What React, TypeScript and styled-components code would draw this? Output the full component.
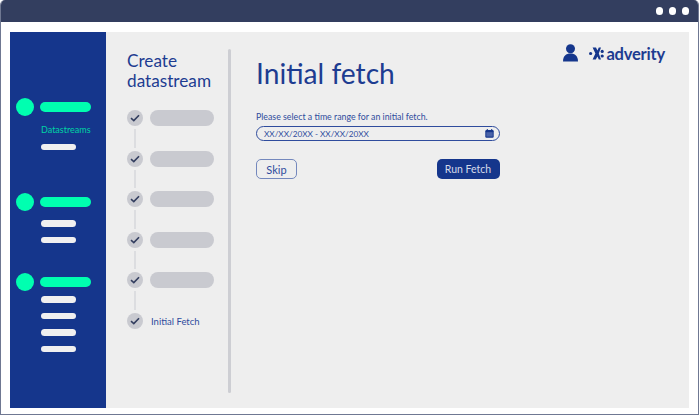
import React from 'react';
import styled, { createGlobalStyle } from 'styled-components';

const GlobalStyle = createGlobalStyle`
  html, body {
    margin: 0;
    padding: 0;
    background: #ffffff;
  }
  body {
    font-family: Lato, "Open Sans", sans-serif;
  }
`;

const Window = styled.div`
  width: 699px;
  height: 415px;
  box-sizing: border-box;
  border: 1px solid #6f7892;
  border-top: none;
  border-radius: 5px 5px 0 0;
  background: #ffffff;
  display: flex;
  flex-direction: column;
  overflow: hidden;
`;

const TitleBar = styled.div`
  height: 22px;
  flex: none;
  background: #333e5f;
  display: flex;
  align-items: center;
  justify-content: flex-end;
  gap: 5.5px;
  padding-right: 9px;
`;

const WindowDot = styled.span`
  width: 7.5px;
  height: 7.5px;
  border-radius: 50%;
  background: #ffffff;
`;

const Frame = styled.div`
  flex: 1;
  display: flex;
  margin: 9.5px 9px 6px 9px;
  min-height: 0;
`;

const Sidebar = styled.div`
  width: 96px;
  flex: none;
  background: #15368c;
  box-sizing: border-box;
  padding: 67px 0 0 6px;
  display: flex;
  flex-direction: column;
`;

const NavGroup = styled.div<{ $gap: number }>`
  display: flex;
  flex-direction: column;
  margin-bottom: ${(p) => p.$gap}px;
`;

const NavHead = styled.div`
  display: flex;
  align-items: center;
  gap: 6px;
  height: 17px;
`;

const NavDot = styled.span`
  width: 18px;
  height: 18px;
  flex: none;
  border-radius: 50%;
  background: #00ffb0;
`;

const NavBar = styled.span`
  width: 51px;
  height: 10px;
  border-radius: 5px;
  background: #00ffb0;
`;

const NavLabel = styled.div`
  margin: 8.5px 0 0 25px;
  font-size: 9px;
  line-height: 12px;
  color: #00d3a4;
`;

const SubList = styled.div<{ $top: number }>`
  display: flex;
  flex-direction: column;
  gap: 10px;
  margin: ${(p) => p.$top}px 0 0 25px;
`;

const SubBar = styled.span`
  width: 35px;
  height: 6.5px;
  border-radius: 4px;
  background: #f0f0f0;
`;

const Main = styled.div`
  flex: 1;
  background: #eeeeee;
  display: flex;
  position: relative;
  min-width: 0;
`;

const StepsColumn = styled.div`
  width: 102px;
  flex: none;
  box-sizing: border-box;
  margin: 17.5px 0 15px 21px;
`;

const StepsTitle = styled.h2`
  margin: 2px 0 19px;
  font-size: 17.2px;
  line-height: 20px;
  font-weight: 400;
  color: #1d3c91;
`;

const StepList = styled.div`
  display: flex;
  flex-direction: column;
`;

const Step = styled.div<{ $last?: boolean }>`
  display: flex;
  align-items: flex-start;
  gap: 7px;
  height: ${(p) => (p.$last ? 16 : 40.5)}px;
`;

const StepMark = styled.div`
  display: flex;
  flex-direction: column;
  align-items: center;
  width: 16px;
  height: 100%;
  flex: none;
`;

const CheckCircle = styled.span`
  width: 16px;
  height: 16px;
  flex: none;
  border-radius: 50%;
  background: #c9cad0;
  display: flex;
  align-items: center;
  justify-content: center;
`;

const Connector = styled.span`
  flex: 1;
  width: 2px;
  margin: 3px 0;
  background: #dcdde0;
`;

const StepPill = styled.span`
  width: 63.5px;
  height: 16px;
  border-radius: 8px;
  background: #c9cad0;
`;

const StepText = styled.span`
  font-size: 9.5px;
  line-height: 18px;
  margin-left: 1px;
  color: #2f4c9d;
`;

const Divider = styled.div`
  width: 3px;
  flex: none;
  margin: 17.5px 0 15px -1px;
  border-radius: 2px;
  background: #cdced3;
`;

const Content = styled.div`
  width: 243.5px;
  flex: none;
  margin-left: 25px;
  padding-top: 24.5px;
`;

const Heading = styled.h1`
  margin: 0 0 21px;
  font-size: 28.2px;
  line-height: 34px;
  font-weight: 400;
  color: #1d3c91;
`;

const Hint = styled.p`
  margin: 0 0 3px;
  font-size: 8.8px;
  line-height: 12px;
  color: #2f4c9d;
`;

const DateField = styled.div`
  height: 15px;
  box-sizing: border-box;
  border: 1px solid #2f4c9d;
  border-bottom-width: 1.5px;
  border-radius: 8px;
  display: flex;
  align-items: center;
  justify-content: space-between;
  padding: 0 5px 0 7px;
  font-size: 8.2px;
  color: #2f4c9d;
`;

const Actions = styled.div`
  display: flex;
  justify-content: space-between;
  margin-top: 18px;
`;

const SkipButton = styled.button`
  width: 41px;
  height: 20px;
  padding: 0;
  box-sizing: border-box;
  border: 1px solid #7488bd;
  border-radius: 5px;
  background: transparent;
  font-family: inherit;
  font-size: 11px;
  color: #2f4c9d;
`;

const RunButton = styled.button`
  width: 63px;
  height: 20px;
  padding: 0;
  border: none;
  border-radius: 5px;
  background: #15368c;
  font-family: inherit;
  font-size: 10.5px;
  color: #d5dbea;
`;

const Brand = styled.div`
  position: absolute;
  top: 12px;
  right: 24px;
  display: flex;
  align-items: center;
`;

const BrandName = styled.span`
  margin-left: 2px;
  font-size: 16.5px;
  line-height: 20px;
  font-weight: 700;
  letter-spacing: -0.2px;
  color: #1d3c91;
`;

const Check = () => (
  <svg width="10" height="8" viewBox="0 0 10 8" fill="none">
    <path d="M1 4.2 L3.8 6.6 L9 1.2" stroke="#333e5f" strokeWidth="1.6" />
  </svg>
);

const UserIcon = () => (
  <svg width="15" height="18" viewBox="0 0 15 18" style={{ marginRight: 11, marginTop: -2 }}>
    <circle cx="7.5" cy="4.7" r="4.5" fill="#15368c" />
    <path d="M0 17.6 C0 12 3 9.6 7.5 9.6 C12 9.6 15 12 15 17.6 Z" fill="#15368c" />
  </svg>
);

const BrandMark = () => (
  <svg width="15" height="13" viewBox="0 0 15 13" fill="#15368c">
    <circle cx="1.6" cy="6.5" r="1.6" />
    <circle cx="13.2" cy="4.4" r="1.6" />
    <circle cx="13.2" cy="9" r="1.6" />
    <path d="M3.6 0.4 L7 0.4 L8.4 3.4 L9.8 0.4 L12 0.4 L9.8 6.5 L12 12.6 L9.8 12.6 L8.4 9.6 L6.8 12.6 L3.6 12.6 L6.4 6.5 Z" />
  </svg>
);

const CalendarIcon = () => (
  <svg width="9" height="9" viewBox="0 0 9 9">
    <rect x="0.3" y="1" width="8.4" height="7.7" rx="1.2" fill="#15368c" />
    <rect x="1.8" y="0" width="1" height="2" fill="#15368c" />
    <rect x="6.2" y="0" width="1" height="2" fill="#15368c" />
    <rect x="1.3" y="3.2" width="6.4" height="4.4" fill="#4a63a8" />
  </svg>
);

const App: React.FC = () => {
  const pendingSteps = [0, 1, 2, 3, 4];

  return (
    <>
      <GlobalStyle />
      <Window>
        <TitleBar>
          <WindowDot />
          <WindowDot />
          <WindowDot />
        </TitleBar>
        <Frame>
          <Sidebar>
            <NavGroup $gap={43}>
              <NavHead>
                <NavDot />
                <NavBar />
              </NavHead>
              <NavLabel>Datastreams</NavLabel>
              <SubList $top={7.5}>
                <SubBar />
              </SubList>
            </NavGroup>
            <NavGroup $gap={30}>
              <NavHead>
                <NavDot />
                <NavBar />
              </NavHead>
              <SubList $top={10}>
                <SubBar />
                <SubBar />
              </SubList>
            </NavGroup>
            <NavGroup $gap={0}>
              <NavHead>
                <NavDot />
                <NavBar />
              </NavHead>
              <SubList $top={6}>
                <SubBar />
                <SubBar />
                <SubBar />
                <SubBar />
              </SubList>
            </NavGroup>
          </Sidebar>
          <Main>
            <StepsColumn>
              <StepsTitle>
                Create
                <br />
                datastream
              </StepsTitle>
              <StepList>
                {pendingSteps.map((step) => (
                  <Step key={step}>
                    <StepMark>
                      <CheckCircle>
                        <Check />
                      </CheckCircle>
                      <Connector />
                    </StepMark>
                    <StepPill />
                  </Step>
                ))}
                <Step $last>
                  <StepMark>
                    <CheckCircle>
                      <Check />
                    </CheckCircle>
                  </StepMark>
                  <StepText>Initial Fetch</StepText>
                </Step>
              </StepList>
            </StepsColumn>
            <Divider />
            <Content>
              <Heading>Initial fetch</Heading>
              <Hint>Please select a time range for an initial fetch.</Hint>
              <DateField>
                <span>XX/XX/20XX - XX/XX/20XX</span>
                <CalendarIcon />
              </DateField>
              <Actions>
                <SkipButton>Skip</SkipButton>
                <RunButton>Run Fetch</RunButton>
              </Actions>
            </Content>
            <Brand>
              <UserIcon />
              <BrandMark />
              <BrandName>adverity</BrandName>
            </Brand>
          </Main>
        </Frame>
      </Window>
    </>
  );
};

export default App;
